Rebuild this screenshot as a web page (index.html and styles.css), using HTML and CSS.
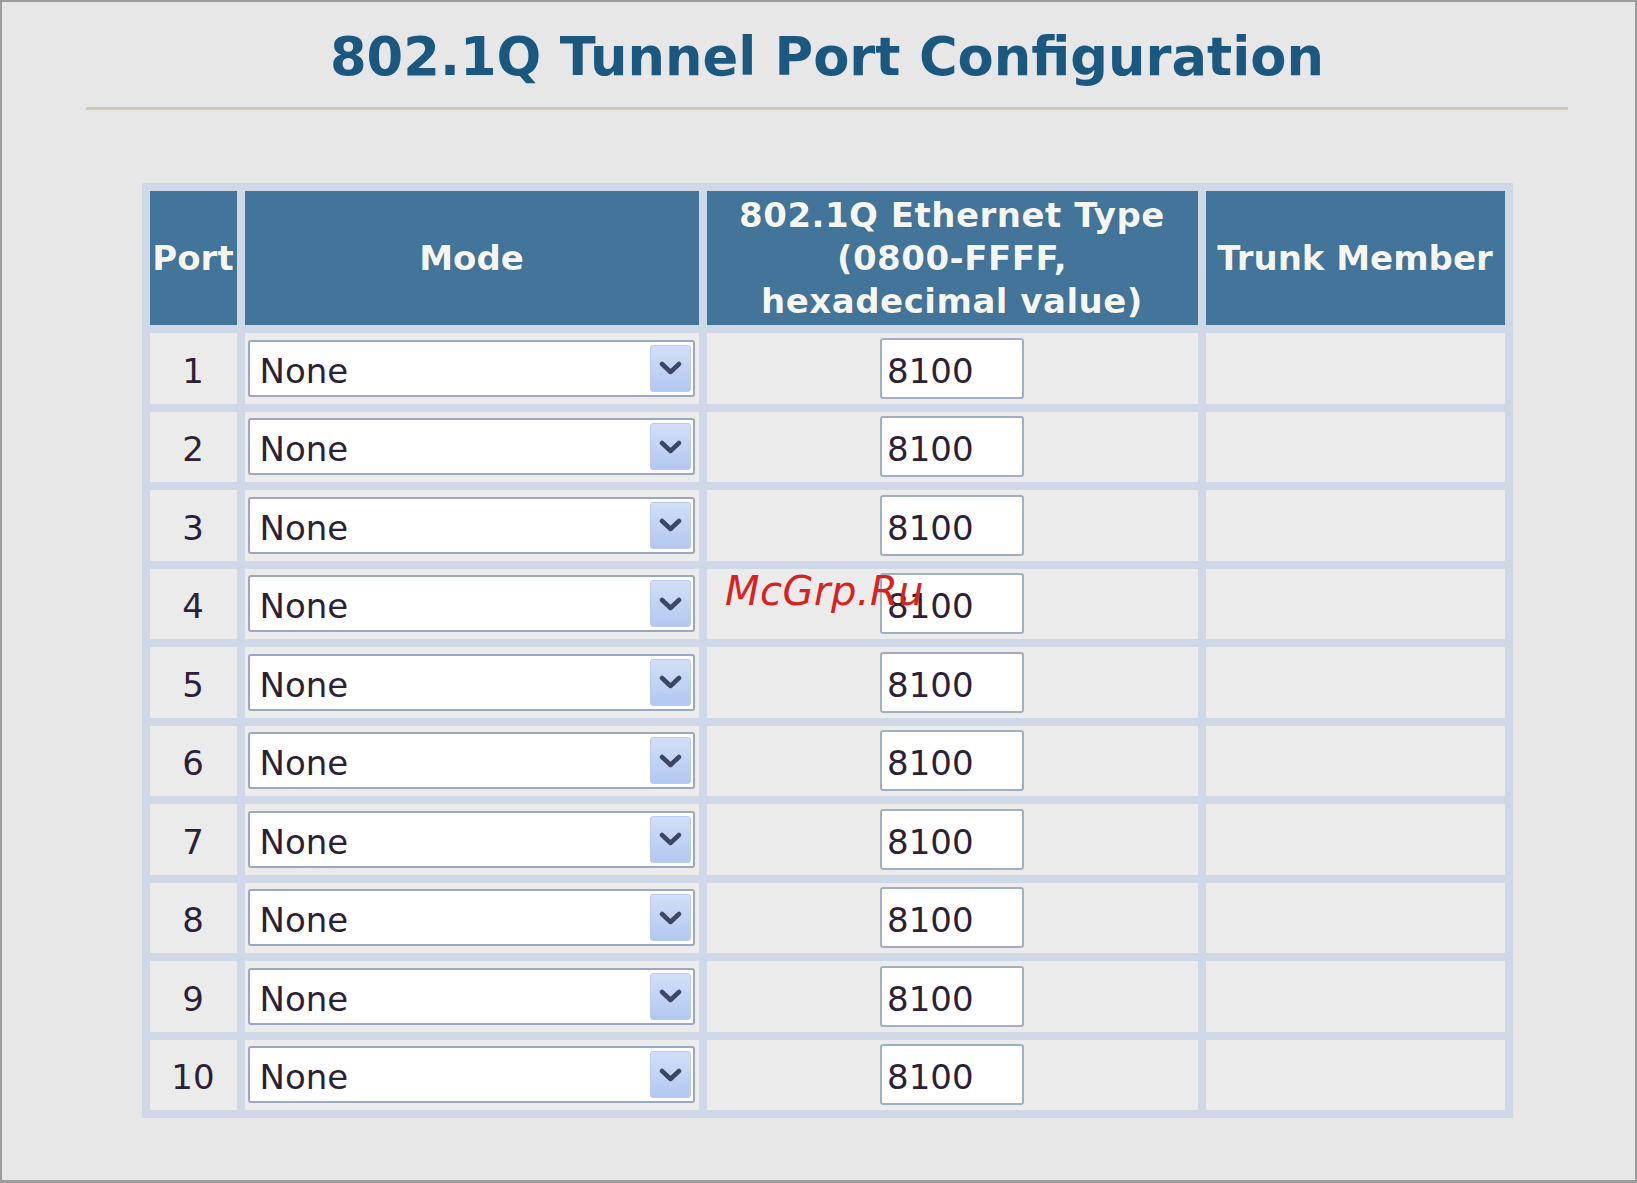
FILE: index.html
```html
<!DOCTYPE html>
<html lang="en">
<head>
<meta charset="utf-8">
<title>802.1Q Tunnel Port Configuration</title>
<link rel="stylesheet" href="styles.css">
</head>
<body>
<div class="frame">
  <div class="content">
    <h1 class="title">802.1Q Tunnel Port Configuration</h1>
    <hr class="rule">
    <table class="grid">
      <colgroup>
        <col class="c-port"><col class="c-mode"><col class="c-eth"><col class="c-trunk">
      </colgroup>
      <thead>
        <tr class="head-row">
          <th class="th-port">Port</th>
          <th>Mode</th>
          <th class="th-eth">802.1Q Ethernet Type<br>(0800-FFFF,<br>hexadecimal value)</th>
          <th>Trunk Member</th>
        </tr>
      </thead>
      <tbody>
        <tr class="row"><td class="port">1</td><td class="mode"><div class="select"><span class="sel-text">None</span><span class="sel-btn"><svg width="23" height="14" viewBox="0 0 23 14"><polyline points="3,3 11.5,11 20,3" fill="none" stroke="#3d4763" stroke-width="4.5" stroke-linecap="round" stroke-linejoin="round"/></svg></span></div></td><td class="eth"><input class="hex" type="text" value="8100"></td><td class="trunk"></td></tr>
        <tr class="row"><td class="port">2</td><td class="mode"><div class="select"><span class="sel-text">None</span><span class="sel-btn"><svg width="23" height="14" viewBox="0 0 23 14"><polyline points="3,3 11.5,11 20,3" fill="none" stroke="#3d4763" stroke-width="4.5" stroke-linecap="round" stroke-linejoin="round"/></svg></span></div></td><td class="eth"><input class="hex" type="text" value="8100"></td><td class="trunk"></td></tr>
        <tr class="row"><td class="port">3</td><td class="mode"><div class="select"><span class="sel-text">None</span><span class="sel-btn"><svg width="23" height="14" viewBox="0 0 23 14"><polyline points="3,3 11.5,11 20,3" fill="none" stroke="#3d4763" stroke-width="4.5" stroke-linecap="round" stroke-linejoin="round"/></svg></span></div></td><td class="eth"><input class="hex" type="text" value="8100"></td><td class="trunk"></td></tr>
        <tr class="row"><td class="port">4</td><td class="mode"><div class="select"><span class="sel-text">None</span><span class="sel-btn"><svg width="23" height="14" viewBox="0 0 23 14"><polyline points="3,3 11.5,11 20,3" fill="none" stroke="#3d4763" stroke-width="4.5" stroke-linecap="round" stroke-linejoin="round"/></svg></span></div></td><td class="eth"><input class="hex" type="text" value="8100"></td><td class="trunk"></td></tr>
        <tr class="row"><td class="port">5</td><td class="mode"><div class="select"><span class="sel-text">None</span><span class="sel-btn"><svg width="23" height="14" viewBox="0 0 23 14"><polyline points="3,3 11.5,11 20,3" fill="none" stroke="#3d4763" stroke-width="4.5" stroke-linecap="round" stroke-linejoin="round"/></svg></span></div></td><td class="eth"><input class="hex" type="text" value="8100"></td><td class="trunk"></td></tr>
        <tr class="row"><td class="port">6</td><td class="mode"><div class="select"><span class="sel-text">None</span><span class="sel-btn"><svg width="23" height="14" viewBox="0 0 23 14"><polyline points="3,3 11.5,11 20,3" fill="none" stroke="#3d4763" stroke-width="4.5" stroke-linecap="round" stroke-linejoin="round"/></svg></span></div></td><td class="eth"><input class="hex" type="text" value="8100"></td><td class="trunk"></td></tr>
        <tr class="row"><td class="port">7</td><td class="mode"><div class="select"><span class="sel-text">None</span><span class="sel-btn"><svg width="23" height="14" viewBox="0 0 23 14"><polyline points="3,3 11.5,11 20,3" fill="none" stroke="#3d4763" stroke-width="4.5" stroke-linecap="round" stroke-linejoin="round"/></svg></span></div></td><td class="eth"><input class="hex" type="text" value="8100"></td><td class="trunk"></td></tr>
        <tr class="row"><td class="port">8</td><td class="mode"><div class="select"><span class="sel-text">None</span><span class="sel-btn"><svg width="23" height="14" viewBox="0 0 23 14"><polyline points="3,3 11.5,11 20,3" fill="none" stroke="#3d4763" stroke-width="4.5" stroke-linecap="round" stroke-linejoin="round"/></svg></span></div></td><td class="eth"><input class="hex" type="text" value="8100"></td><td class="trunk"></td></tr>
        <tr class="row"><td class="port">9</td><td class="mode"><div class="select"><span class="sel-text">None</span><span class="sel-btn"><svg width="23" height="14" viewBox="0 0 23 14"><polyline points="3,3 11.5,11 20,3" fill="none" stroke="#3d4763" stroke-width="4.5" stroke-linecap="round" stroke-linejoin="round"/></svg></span></div></td><td class="eth"><input class="hex" type="text" value="8100"></td><td class="trunk"></td></tr>
        <tr class="row"><td class="port">10</td><td class="mode"><div class="select"><span class="sel-text">None</span><span class="sel-btn"><svg width="23" height="14" viewBox="0 0 23 14"><polyline points="3,3 11.5,11 20,3" fill="none" stroke="#3d4763" stroke-width="4.5" stroke-linecap="round" stroke-linejoin="round"/></svg></span></div></td><td class="eth"><input class="hex" type="text" value="8100"></td><td class="trunk"></td></tr>
      </tbody>
    </table>
  </div>
  <div class="watermark">McGrp.Ru</div>
</div>
</body>
</html>
```
FILE: styles.css
```css
html, body {
  margin: 0;
  padding: 0;
  background: #e7e7e7;
}

.frame {
  position: relative;
  box-sizing: border-box;
  width: 1637px;
  height: 1183px;
  border: 2px solid #9c9c9c;
  border-bottom-width: 3px;
  background: #e7e7e7;
  font-family: "DejaVu Sans", Verdana, sans-serif;
  overflow: hidden;
}

.content {
  padding: 25px 67px 0 84px;
}

.title {
  margin: 0;
  font-size: 52.7px;
  line-height: 60px;
  font-weight: bold;
  text-align: center;
  color: #1b5880;
}

.rule {
  margin: 20px 0 0 0;
  height: 3px;
  border: 0;
  background: #cdc7b4;
}

.grid {
  margin: 73px auto 0 auto;
  width: 1371px;
  table-layout: fixed;
  border-collapse: separate;
  border-spacing: 8px;
  background: #cfd8e7;
}

.c-port { width: 87px; }
.c-mode { width: 454px; }
.c-eth { width: 491px; }
.c-trunk { width: 299px; }

.head-row {
  height: 134px;
}

.grid th {
  padding: 0;
  background: #43759a;
  color: #f6f6f0;
  font-size: 34px;
  line-height: 43px;
  font-weight: bold;
  text-align: center;
  vertical-align: middle;
  text-shadow: 0 0 1px rgba(30, 60, 110, 0.6);
}

.grid .th-port {
  white-space: nowrap;
  overflow: visible;
}

.grid .th-eth {
  letter-spacing: 0.5px;
}

.row {
  height: 70.5px;
}

.grid td {
  padding: 0;
  background: #ebebeb;
  vertical-align: middle;
  font-size: 34px;
  color: #2d1f35;
}

.port {
  text-align: center;
  padding-top: 5px !important;
}

.mode {
  padding-left: 3px !important;
}

.select {
  box-sizing: border-box;
  width: 447px;
  height: 57px;
  display: flex;
  align-items: center;
  border: 2px solid #9aa9bf;
  border-radius: 3px;
  background: #ffffff;
  padding: 0 2px 0 10px;
}

.sel-text {
  flex: 1;
  font-size: 34px;
  padding-top: 5px;
  color: #2d1f35;
}

.sel-btn {
  box-sizing: border-box;
  width: 41px;
  height: 47px;
  display: flex;
  align-items: center;
  justify-content: center;
  border-radius: 3px;
  border: 1px solid #bccbeb;
  background: linear-gradient(#d3dff8, #b2c7f1);
}

.eth {
  text-align: center;
}

.hex {
  box-sizing: border-box;
  width: 144px;
  height: 61px;
  margin: 0;
  padding: 5px 0 0 5px;
  border: 2px solid #9fb0c4;
  border-radius: 3px;
  background: #ffffff;
  font-family: "DejaVu Sans", Verdana, sans-serif;
  font-size: 34px;
  color: #2d1f35;
  vertical-align: middle;
}

.watermark {
  position: absolute;
  left: 723px;
  top: 569px;
  font-family: "DejaVu Sans", Verdana, sans-serif;
  font-style: italic;
  font-size: 40px;
  line-height: 40px;
  letter-spacing: 0.5px;
  color: #d8221f;
}
```
